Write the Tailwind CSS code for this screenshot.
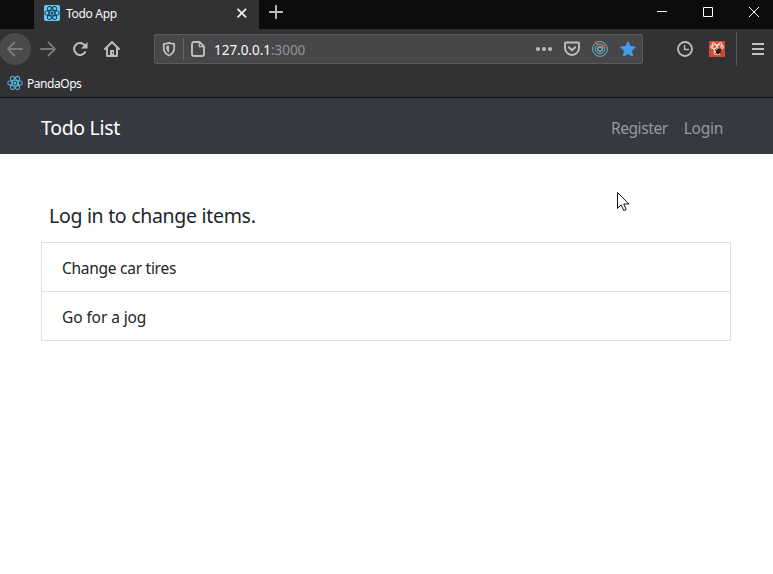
<!DOCTYPE html>
<html lang="en">
<head>
<meta charset="utf-8">
<title>Todo App</title>
<script src="https://cdn.jsdelivr.net/npm/@tailwindcss/browser@4"></script>
</head>
<body class="w-[773px] h-[574px] overflow-hidden bg-white font-['Noto_Sans','Open_Sans',sans-serif] text-[#212529]">
<svg class="hidden">
  <symbol id="atom" viewBox="0 0 16 16">
    <g fill="none" stroke="currentColor" stroke-width="1.1">
      <ellipse cx="8" cy="8" rx="7.3" ry="2.8"/>
      <ellipse cx="8" cy="8" rx="7.3" ry="2.8" transform="rotate(60 8 8)"/>
      <ellipse cx="8" cy="8" rx="7.3" ry="2.8" transform="rotate(120 8 8)"/>
    </g>
    <circle cx="8" cy="8" r="1.5" fill="currentColor"/>
  </symbol>
</svg>

<!-- Tab strip -->
<div class="flex h-[29px] bg-[#0c0c0c] pl-[34px]">
  <div class="flex w-[225px] items-start bg-[#323234] pl-[10px] pt-[5px]">
    <div class="size-4 rounded-[2px] bg-[#61cff8] text-[#20465e]"><svg class="size-4"><use href="#atom"/></svg></div>
    <span class="ml-[6px] w-[168px] text-[12px] leading-[18px] tracking-[-0.3px] text-[#f9f9fa]">Todo App</span>
    <svg class="size-4" viewBox="0 0 16 16" fill="none" stroke="#f0f0f0" stroke-width="1.8"><path d="M3.5 3.8l8.6 8.6M12.1 3.8l-8.6 8.6"/></svg>
  </div>
  <svg class="ml-[9px] mt-[4px] size-4" viewBox="0 0 16 16" fill="none" stroke="#bdbdbe" stroke-width="1.9"><path d="M8 1v14M1 8h14"/></svg>
  <div class="ml-auto flex pt-[4px] text-white">
    <svg class="w-[46px] h-4" viewBox="0 0 46 16" stroke="currentColor" fill="none"><path d="M11 7.500h10"/></svg>
    <svg class="w-[46px] h-4" viewBox="0 0 46 16" stroke="currentColor" fill="none"><path d="M11.500 3.500h9v9h-9z"/></svg>
    <svg class="w-[35px] h-4" viewBox="0 0 35 16" stroke="currentColor" fill="none"><path d="M11 3l10 10M21 3L11 13"/></svg>
  </div>
</div>

<!-- Toolbar -->
<div class="flex h-[41px] items-center bg-[#323234] pb-px text-[#bfbfbf]">
  <div class="-ml-px flex size-8 shrink-0 items-center justify-center rounded-full bg-[#4a4a4c] text-[#7d7875]">
    <svg class="size-4" viewBox="0 0 16 16" fill="none" stroke="currentColor" stroke-width="1.8" stroke-linecap="round" stroke-linejoin="round"><path d="M15 8H1M7.500 1.500L1 8l6.500 6.500"/></svg>
  </div>
  <svg class="ml-[9px] size-4 text-[#77777a]" viewBox="0 0 16 16" fill="none" stroke="currentColor" stroke-width="1.8" stroke-linecap="round" stroke-linejoin="round"><path d="M1 8h14M8.500 1.500L15 8l-6.500 6.500"/></svg>
  <svg class="ml-4 size-4" viewBox="0 0 16 16" fill="none" stroke="currentColor" stroke-width="2"><path d="M13 4.500A6 6 0 1 0 13.500 10.500"/><path d="M15.500 1v6.500H9z" fill="currentColor" stroke="none"/></svg>
  <svg class="ml-4 size-4" viewBox="0 0 16 16" fill="none" stroke="currentColor" stroke-width="1.900" stroke-linejoin="round" stroke-linecap="round"><path d="M1 8l7-7 7 7M3 7.500V15h10V7.500"/><path d="M8 14.500V9" stroke-width="4" stroke-linecap="butt"/><path d="M8.500 11v1.500" stroke="#323234" stroke-width="1" stroke-linecap="butt"/></svg>
  <div class="ml-[34px] flex h-[30px] w-[489px] items-center rounded-[2px] border border-[#5c5c5f] bg-[#474749]">
    <svg class="ml-[6px] size-4" viewBox="0 0 16 16" fill="none" stroke="currentColor" stroke-width="1.800" stroke-linejoin="round"><path d="M8 1.800c2 .8 3.500 1 5.200 1v4.500c0 3.600-2.200 5.800-5.200 7.200-3-1.400-5.200-3.600-5.200-7.200V2.800c1.700 0 3.200-.2 5.200-1z"/><path d="M8 4.300v7.500c-1.700-1.200-2.700-2.500-2.700-4.500V5c1 0 1.800-.2 2.700-.7z" fill="currentColor" stroke="none"/></svg>
    <div class="ml-[6px] h-[22px] w-px bg-[#67676a]"></div>
    <svg class="ml-[6px] size-4" viewBox="0 0 16 16" fill="none" stroke="currentColor" stroke-width="1.900" stroke-linejoin="round"><path d="M4 1h5.500L14 5.500V13a2 2 0 0 1-2 2H4a2 2 0 0 1-2-2V3a2 2 0 0 1 2-2z"/><path d="M9.300 1v4.700H14" stroke-width="1.300"/></svg>
    <span class="ml-[8px] mt-px w-[322px] whitespace-nowrap text-[13.5px] leading-[18px] tracking-[-0.03px] text-[#f9f9fa]">127.0.0.1<span class="text-[#929294]">:3000</span></span>
    <svg class="size-4" viewBox="0 0 16 16" fill="currentColor"><circle cx="2" cy="8" r="2"/><circle cx="8" cy="8" r="2"/><circle cx="14" cy="8" r="2"/></svg>
    <svg class="ml-3 size-4" viewBox="0 0 16 16" fill="none" stroke="currentColor" stroke-width="1.900" stroke-linecap="round" stroke-linejoin="round"><path d="M2 1.500h12a1 1 0 0 1 1 1v4.500a7 7 0 0 1-14 0V2.500a1 1 0 0 1 1-1z"/><path d="M4.800 6.200L8 9.300l3.200-3.100"/></svg>
    <svg class="ml-3 size-4" viewBox="0 0 16 16" fill="none" stroke="#6eb5cd"><circle cx="8" cy="8" r="7.400"/><circle cx="8" cy="8" r="4.800"/><circle cx="8" cy="8" r="2.300" stroke-width="1.400"/><circle cx="4.500" cy="1.800" r="1.600" fill="#e0562f" stroke="none"/><circle cx="11.500" cy="5" r="1.700" fill="#e0562f" stroke="none"/></svg>
    <svg class="ml-3 size-4" viewBox="0 0 16 16" fill="#459df0" stroke="#459df0" stroke-linejoin="round"><path d="M8 .7l2.200 4.700 5.100.7-3.700 3.700.9 5.300L8 12.600l-4.500 2.500.9-5.300L.7 6.100l5.100-.7z"/></svg>
  </div>
  <svg class="ml-[34px] size-4" viewBox="0 0 16 16" fill="none" stroke="currentColor" stroke-width="1.800"><circle cx="8" cy="8" r="7"/><path d="M7.500 4v4.500H12" stroke-width="1.300"/></svg>
  <svg class="ml-4 size-4" viewBox="0 0 16 16"><path fill="#cf4b32" d="M0 0h16v16H0z"/><g fill="none" stroke="#f6ddd0" stroke-width="1.100"><ellipse cx="8" cy="6" rx="6.300" ry="2.200"/><ellipse cx="7" cy="7.500" rx="6.500" ry="2.200" transform="rotate(60 7 7.500)"/><ellipse cx="9" cy="7.500" rx="6.500" ry="2.200" transform="rotate(120 9 7.500)"/></g><ellipse cx="9.500" cy="10.200" rx="2.300" ry="3" transform="rotate(35 9.500 10.200)" fill="#2c1c1a"/><path d="M6 8.500l6.500 4M6.500 12.500l6-5.500" stroke="#2c1c1a" stroke-width=".9"/></svg>
  <div class="ml-[11px] h-[34px] w-px bg-[#57575a]"></div>
  <svg class="ml-[13px] size-4" viewBox="0 0 16 16" stroke="#c5c2c1" stroke-width="2"><path d="M2 3h12M2 8h12M2 13h12"/></svg>
</div>

<!-- Bookmarks -->
<div class="flex h-[28px] items-start border-b border-[#0c0c0d] bg-[#323234] pl-[7px] pt-[5px]">
  <svg class="size-4 text-[#55b0d2]"><use href="#atom"/></svg>
  <span class="ml-1 text-[12px] leading-[18px] tracking-[-0.45px] text-[#f9f9fa]">PandaOps</span>
</div>

<!-- Page navigation -->
<nav class="flex h-[56px] items-center bg-[#353a41] pl-[41px] pr-[50px]">
  <span class="mt-[3px] text-[19.5px] leading-[30px] tracking-[-0.32px] text-white">Todo List</span>
  <span class="ml-auto mt-[3px] text-[15.5px] leading-6 tracking-[-0.4px] text-[#98999c]">Register</span>
  <span class="ml-4 mt-[3px] text-[15.5px] leading-6 tracking-[-0.28px] text-[#98999c]">Login</span>
</nav>

<main class="pl-[41px] pr-[42px] pt-[47px]">
  <p class="pl-2 text-[19.5px] leading-[30px] tracking-[-0.3px]">Log in to change items.</p>
  <ul class="mt-[11px] divide-y divide-[#dfdfdf] border border-[#dfdfdf] text-[15.5px] leading-6">
    <li class="h-[49px] pl-5 pt-[13px] tracking-[-0.27px]">Change car tires</li>
    <li class="h-[48px] pl-5 pt-[13px] tracking-[-0.1px]">Go for a jog</li>
  </ul>
</main>

<!-- Pointer -->
<svg class="absolute left-[617px] top-[191px] h-[21px] w-[13px]" viewBox="0 0 13 21" fill="white" stroke="#111"><path d="M.5 1.500v16l3.700-3.600 2.500 5.600 2.500-1-2.500-5.500h5.200z"/></svg>
</body>
</html>
